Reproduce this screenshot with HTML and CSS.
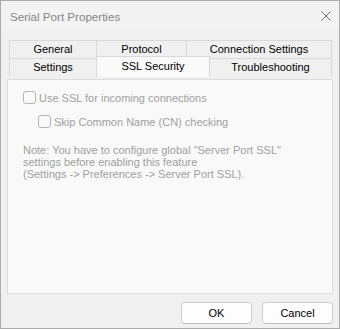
FILE: index.html
```html
<!DOCTYPE html>
<html>
<head>
<meta charset="utf-8">
<link rel="stylesheet" href="styles.css">
</head>
<body>
<div class="window">
  <div class="titlebar">
    <span class="title">Serial Port Properties</span>
    <svg class="close" width="10" height="10" viewBox="0 0 10 10"><path d="M0.5 0.5 L9.5 9.5 M9.5 0.5 L0.5 9.5" stroke="#6f6f6f" stroke-width="1" fill="none"/></svg>
  </div>
  <div class="tabs">
    <div class="tabrow row1">
      <div class="tab t-general">General</div>
      <div class="tab t-protocol">Protocol</div>
      <div class="tab t-conn">Connection Settings</div>
    </div>
    <div class="tabrow row2">
      <div class="tab t-settings">Settings</div>
      <div class="tab t-ssl selected">SSL Security</div>
      <div class="tab t-trouble">Troubleshooting</div>
    </div>
  </div>
  <div class="panel">
    <label class="check c1"><span class="box"></span><span class="lbl">Use SSL for incoming connections</span></label>
    <label class="check c2"><span class="box"></span><span class="lbl">Skip Common Name (CN) checking</span></label>
    <p class="note">Note: You have to configure global "Server Port SSL"<br>settings before enabling this feature<br>(Settings -&gt; Preferences -&gt; Server Port SSL).</p>
  </div>
  <div class="buttons">
    <button class="btn">OK</button>
    <button class="btn">Cancel</button>
  </div>
</div>
</body>
</html>
```
FILE: styles.css
```css
* { box-sizing: border-box; }
html, body { margin: 0; padding: 0; }
body { width: 340px; height: 329px; overflow: hidden; font-family: "Liberation Sans", Arial, sans-serif; font-size: 11px; color: #000; }
.window { width: 340px; height: 329px; border: 1px solid #acacac; background: #f0f0f0; display: flex; flex-direction: column; }
.titlebar { height: 29px; background: #f3f3f3; display: flex; align-items: center; justify-content: space-between; padding: 0 8px 0 9px; }
.title { font-size: 11.6px; color: #858585; padding-top: 1px; }
.close { display: block; margin-top: 1px; }
.tabs { margin: 10px 0 0 8px; }
.tabrow { display: flex; }
.row2 { margin-top: -1px; }
.tab { border: 1px solid #d9d9d9; background: #f0f0f0; text-align: center; white-space: nowrap; }
.tab + .tab { margin-left: -1px; }
.row1 .tab { height: 19px; line-height: 17px; }
.row2 .tab { height: 18px; line-height: 17px; border-bottom: none; }
.t-general { width: 88px; }
.t-protocol { width: 91px; }
.t-conn { width: 146px; }
.t-settings { width: 88px; }
.t-ssl { width: 114px; }
.t-trouble { width: 123px; }
.tab.selected { position: relative; z-index: 1; top: -2px; height: 21px; line-height: 19px; background: #f9f9f9; border-color: #d9d9d9; }
.panel { margin-left: 6px; width: 326px; height: 215px; border: 1px solid #dcdcdc; background: #f9f9f9; padding: 11px 0 0 15px; }
.check { display: flex; align-items: center; color: #a0a0a0; height: 13px; }
.c2 { margin: 11px 0 0 15px; }
.box { width: 13px; height: 13px; border: 1px solid #b3b3b3; border-radius: 3px; background: #f9f9f9; flex: none; }
.lbl { margin-left: 3px; }
.note { margin: 16px 0 0 0; color: #a0a0a0; line-height: 12px; }
.buttons { display: flex; justify-content: flex-end; gap: 10px; margin-top: 8px; padding-right: 6px; }
.btn { width: 71px; height: 22px; border: 1px solid #cfcfcf; border-bottom-color: #bdbdbd; border-radius: 4px; background: #fdfdfd; font-family: "Liberation Sans", Arial, sans-serif; font-size: 11px; color: #000; padding: 0; }
```
